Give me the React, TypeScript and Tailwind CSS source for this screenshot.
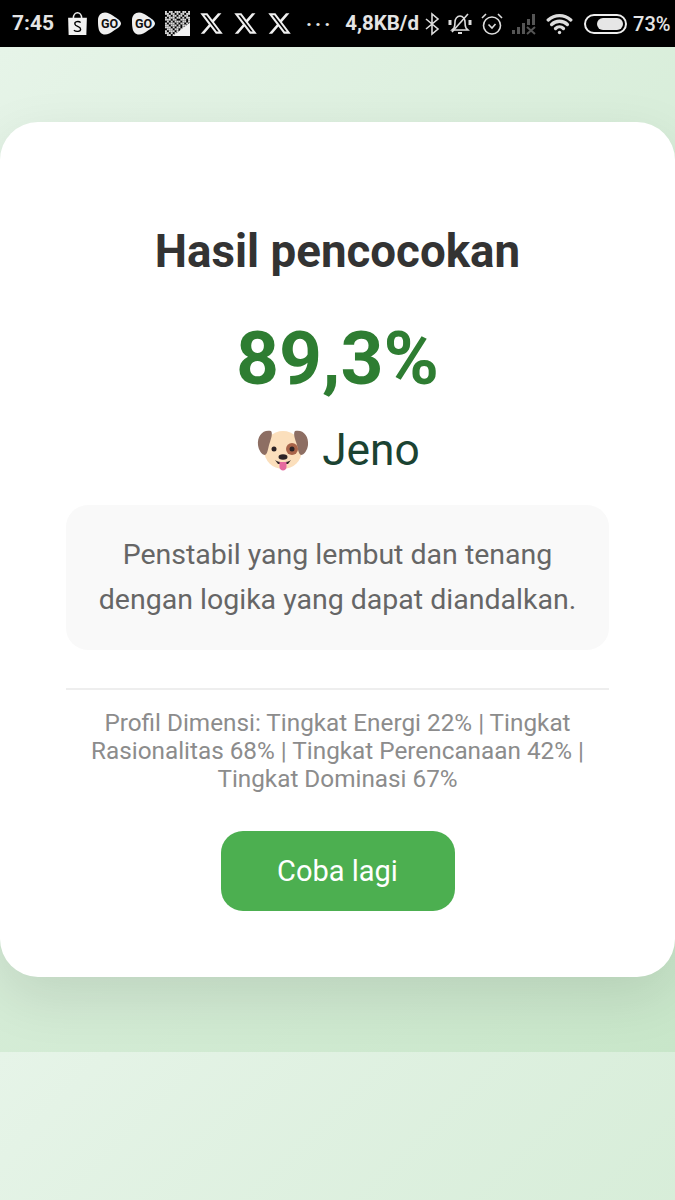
import { Wifi } from 'lucide-react';

const mosaic = [
  '1011011101101',
  '1101101011011',
  '0110110110110',
  '1011101101011',
  '1110110011101',
  '0101011101101',
  '1011101011010',
  '1101110101100',
  '1110101101000',
  '0111011010000',
  '1011101000000',
  '1101010000000',
  '0110100000000',
];

function ShopeeIcon() {
  return (
    <svg width="21" height="25" viewBox="0 0 20 24">
      <path d="M6 7 C6 0 14 0 14 7" fill="none" stroke="#eee" strokeWidth="1.5" />
      <path d="M1 6.5 H19 L18.5 23 H1.5 Z" fill="#f2f2f2" />
      <path d="M13 11 C11 9.5 7 10 7.5 12.5 C8 15 13 14.5 13 17.5 C13 20 8.5 20 6.5 18.5" fill="none" stroke="#000" strokeWidth="1.3" />
    </svg>
  );
}

function GoIcon() {
  return (
    <svg width="25" height="25" viewBox="0 0 25 25">
      <path d="M8 1.5C4 1.5 1 4.5 1 9c0 3 0 5 .5 8 .6 4 3 6.5 6.5 6.5 3 0 5.500-1.500 9-4 3-2 7-4 7-7s-4-5-7.500-7.500C13 3 11 1.500 8 1.500z" fill="#efefef" />
      <text x="12.5" y="16.500" textAnchor="middle" fontSize="12.500" fontWeight="700" fill="#111">GO</text>
    </svg>
  );
}

function QrIcon() {
  return (
    <svg width="25" height="25" viewBox="0 0 26 26">
      {mosaic.map((row, y) =>
        row.split('').map((cell, x) =>
          cell === '1' ? <rect key={`${x}-${y}`} x={x * 2} y={y * 2} width="2" height="2" fill="#d8d8d8" /> : null
        )
      )}
      <path d="M26 12v14H8z" fill="#f2f2f2" />
    </svg>
  );
}

function XIcon() {
  return (
    <svg width="25" height="25" viewBox="0 0 24 24" fill="#f0f0f0">
      <path d="M18.244 2.25h3.308l-7.227 8.26 8.502 11.24H16.17l-5.214-6.817L4.99 21.75H1.68l7.73-8.835L1.254 2.25H8.08l4.713 6.231zm-1.161 17.52h1.833L7.084 4.126H5.117z" />
    </svg>
  );
}

function BluetoothIcon() {
  return (
    <svg width="16" height="26" viewBox="0 0 16 24" fill="none" stroke="#ddd" strokeWidth="1.6">
      <path d="M2 7l12 10-6 5V2l6 5L2 17" />
    </svg>
  );
}

function MutedBell() {
  return (
    <svg width="24" height="24" viewBox="0 0 24 24" fill="none" stroke="#ddd" strokeWidth="1.6">
      <path d="M6 16c1-2 1-4 1-6 0-3 2-6 5-6s5 3 5 6c0 2 0 4 1 6l2 2H4z" />
      <path d="M10 21h4" strokeWidth="2" />
      <path d="M20 2L4 20" />
      <path d="M2 8v5M22 8v5" strokeWidth="3" />
    </svg>
  );
}

function AlarmIcon() {
  return (
    <svg width="24" height="24" viewBox="0 0 24 24" fill="none" stroke="#ddd" strokeWidth="1.6">
      <circle cx="12" cy="13.5" r="8.5" />
      <path d="M8.5 12.5 12 16l3.5-4" />
      <path d="M2 6l4-4M22 6l-4-4" />
    </svg>
  );
}

function SignalIcon() {
  return (
    <svg width="26" height="22" viewBox="0 0 26 22" fill="#555">
      <rect x="1" y="17" width="3" height="4" />
      <rect x="6" y="14" width="3" height="7" />
      <rect x="11" y="10" width="3" height="11" />
      <rect x="16" y="6" width="3" height="6" />
      <rect x="21" y="1" width="3" height="11" />
      <path d="M16 14l8 7M24 14l-8 7" stroke="#555" strokeWidth="2" />
    </svg>
  );
}

function BatteryIcon() {
  return (
    <div className="flex h-[20px] w-[43px] items-center justify-end rounded-[10px] border-2 border-[#eee] p-[2px]">
      <div className="h-full w-[26px] rounded-[6px] bg-[#e6e6e6]" />
    </div>
  );
}

function DogEmoji() {
  return (
    <svg width="52" height="44" viewBox="0 0 52 44">
      <ellipse cx="26" cy="22" rx="19" ry="19" fill="#fbdfbc" />
      <path d="M14 3C6 1 0 8 1 17c.5 5 4 10 7 10 3-1 3-8 5-13 1-3 3-9 1-11z" fill="#8d6e63" />
      <path d="M38 3c8-2 14 5 13 14-.5 5-4 10-7 10-3-1-3-8-5-13-1-3-3-9-1-11z" fill="#8d6e63" />
      <circle cx="35" cy="21" r="6" fill="#a9644a" />
      <circle cx="17" cy="21" r="2.500" fill="#2c2326" />
      <circle cx="35" cy="21" r="2.500" fill="#2c2326" />
      <path d="M18 32c4 3 12 3 16 0l-3 4H21z" fill="#2c2326" />
      <ellipse cx="26" cy="29" rx="4.500" ry="2.800" fill="#2c2326" />
      <path d="M22.500 34h7v5c0 4.500-7 4.500-7 0z" fill="#e56a9f" />
    </svg>
  );
}

function StatusBar() {
  return (
    <div className="flex h-[47px] items-center bg-black pl-[12px] text-[#e4e4e4]">
      <span className="mr-[13px] text-[21px] font-bold">7:45</span>
      <div className="flex items-center gap-[9px]">
        <ShopeeIcon />
        <GoIcon />
        <GoIcon />
        <QrIcon />
        <XIcon />
        <XIcon />
        <XIcon />
      </div>
      <span className="ml-[14px] text-[20px] font-bold tracking-[3px]">···</span>
      <span className="ml-[12px] text-[20.500px] font-bold">4,8KB/d</span>
      <div className="ml-[5px] flex items-center">
        <BluetoothIcon />
        <div className="ml-[8px]"><MutedBell /></div>
        <div className="ml-[8px]"><AlarmIcon /></div>
        <div className="ml-[7px]"><SignalIcon /></div>
        <Wifi className="ml-[9px]" size={27} strokeWidth={3} color="#ddd" />
        <div className="ml-[11px]"><BatteryIcon /></div>
      </div>
      <span className="ml-[6px] text-[20px] font-medium">73%</span>
    </div>
  );
}

function App() {
  return (
    <div className="h-[1200px] overflow-hidden bg-white font-['Roboto',sans-serif]">
      <StatusBar />
      <div className="h-[1153px] bg-[linear-gradient(135deg,#e6f4e8,#c8e6c9)] bg-[length:100%_1005px] pt-[75px]">
        <section className="flex h-[855px] flex-col items-center rounded-[38px] bg-white px-[66px] pt-[100px] shadow-[0_19px_56px_rgba(0,0,0,0.1)]">
          <h1 className="text-[45.700px] font-bold leading-[60px] text-[#333]">Hasil pencocokan</h1>
          <p className="mt-[32px] text-[75px] font-bold leading-[88px] text-[#2e7d32]">89,3%</p>
          <div className="ml-[2px] mt-[18px] flex h-[60px] items-center gap-[13px]">
            <DogEmoji />
            <span className="text-[44.300px] leading-[60px] text-[#1b4332]">Jeno</span>
          </div>
          <div className="mt-[25px] flex h-[145px] w-full flex-col justify-center rounded-[22px] bg-[#f9f9f9] pb-[2px] text-center text-[28.500px] leading-[45px] text-[#666]">
            <p>Penstabil yang lembut dan tenang</p>
            <p>dengan logika yang dapat diandalkan.</p>
          </div>
          <div className="mt-[38px] w-full border-t-2 border-[#eee] pt-[19px] text-center text-[24.300px] leading-[28px] text-[#8c8c8c]">
            Profil Dimensi: Tingkat Energi 22% | Tingkat Rasionalitas 68% | Tingkat Perencanaan 42% | Tingkat Dominasi 67%
          </div>
          <button className="mt-[38px] h-[80px] w-[234px] rounded-[22px] bg-[#4caf50] pt-[2px] text-[29px] text-white">
            Coba lagi
          </button>
        </section>
      </div>
    </div>
  );
}

export default App;
